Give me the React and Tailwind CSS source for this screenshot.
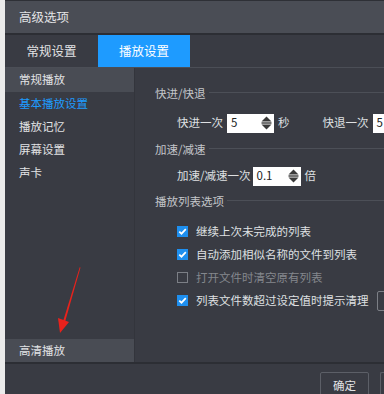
import React from "react";

const font = { fontFamily: '"Noto Sans CJK SC", "Noto Sans", sans-serif' };

function Spin() {
  return (
    <svg width="11" height="14" viewBox="0 0 11 14" className="shrink-0">
      <path d="M5.5 0.5 L10.5 5.5 L0.5 5.5 Z" fill="#3a3a3a" />
      <rect x="0.5" y="6.3" width="10" height="1.4" fill="#3a3a3a" />
      <path d="M0.5 8.5 L10.5 8.5 L5.5 13.5 Z" fill="#3a3a3a" />
    </svg>
  );
}

function NumInput({ value, w }) {
  return (
    <div className={`flex h-[19px] items-center justify-between bg-white pl-[4px] pr-[2px] ${w}`}>
      <span className="text-[11.5px] leading-none text-[#222]">{value}</span>
      <Spin />
    </div>
  );
}

function Heading({ children, className = "" }) {
  return (
    <div className={`flex h-[20px] items-center pl-[20px] ${className}`}>
      <span className="text-[11.5px] leading-none text-[#c4c6ca]">{children}</span>
      <div className="ml-[3px] h-px flex-1 -translate-y-[2px] bg-[#4c4f57]" />
    </div>
  );
}

function Check({ checked, children }) {
  return (
    <div className="flex h-[23px] items-center pl-[42px]">
      {checked ? (
        <div className="flex h-[11px] w-[11px] items-center justify-center bg-[#1e8fef]">
          <svg width="9" height="9" viewBox="0 0 9 9">
            <path d="M1.3 4.6 L3.5 6.7 L7.8 2.2" stroke="white" strokeWidth="1.7" fill="none" />
          </svg>
        </div>
      ) : (
        <div className="h-[11px] w-[11px] border border-[#7c7f86]" />
      )}
      <span
        className={`ml-[8px] whitespace-nowrap text-[11.5px] leading-none ${
          checked ? "text-[#dfe0e2]" : "text-[#84878d]"
        }`}
      >
        {children}
      </span>
    </div>
  );
}

export default function App() {
  return (
    <div
      className="relative flex h-[394px] w-[384px] overflow-hidden bg-[#393b43]"
      style={font}
    >
      <div className="w-[5px] shrink-0 bg-[#ebebeb]" />
      <div className="flex min-w-0 flex-1 flex-col">
        {/* title */}
        <div className="flex h-[35px] shrink-0 items-center border-t border-b-2 border-t-[#2e3036] border-b-[#2c2e34] bg-[#4a4d55] pl-[14px]">
          <span className="text-[12.5px] text-[#e2e3e5]">高级选项</span>
        </div>
        {/* tabs */}
        <div className="flex h-[33px] shrink-0 border-b border-[#4b4e56] bg-[#393b43]">
          <div className="flex w-[93px] items-center justify-center text-[12.5px] text-[#e2e3e5]">
            常规设置
          </div>
          <div className="flex w-[92px] items-center justify-center bg-[#1e9bff] text-[12.5px] text-white">
            播放设置
          </div>
        </div>
        {/* body */}
        <div className="flex min-h-0 flex-1">
          <div className="flex w-[130px] shrink-0 flex-col justify-between border-r border-[#33353c] bg-[#393b43]">
            <div className="flex flex-col text-[11.5px]">
              <div className="flex h-[24px] items-center bg-[#494c54] pl-[14px] text-[#e2e3e5]">常规播放</div>
              <div className="flex h-[23px] items-center pl-[14px] text-[#1e9bff]">基本播放设置</div>
              <div className="flex h-[23px] items-center pl-[14px] text-[#e2e3e5]">播放记忆</div>
              <div className="flex h-[23px] items-center pl-[14px] text-[#e2e3e5]">屏幕设置</div>
              <div className="flex h-[23px] items-center pl-[14px] text-[#e2e3e5]">声卡</div>
            </div>
            <div className="flex h-[23px] items-center bg-[#494c54] pl-[14px] text-[11.5px] text-[#e2e3e5]">
              高清播放
            </div>
          </div>
          <div className="flex min-w-0 flex-1 flex-col overflow-hidden pt-[16px]">
            <Heading>快进/快退</Heading>
            <div className="mt-[9px] flex h-[20px] items-center whitespace-nowrap pl-[42px] text-[11.5px] text-[#dfe0e2]">
              <span>快进一次</span>
              <div className="ml-[4px]">
                <NumInput value="5" w="w-[47px]" />
              </div>
              <span className="ml-[4px]">秒</span>
              <span className="ml-[33px]">快退一次</span>
              <div className="ml-[4px] shrink-0">
                <NumInput value="5" w="w-[47px]" />
              </div>
            </div>
            <Heading className="mt-[7px]">加速/减速</Heading>
            <div className="mt-[6px] flex h-[20px] items-center whitespace-nowrap pl-[42px] text-[11.5px] text-[#dfe0e2]">
              <span>加速/减速一次</span>
              <div className="ml-[2px]">
                <NumInput value="0.1" w="w-[48px]" />
              </div>
              <span className="ml-[4px]">倍</span>
            </div>
            <Heading className="mt-[6px]">播放列表选项</Heading>
            <div className="mt-[8px] flex flex-col">
              <Check checked>继续上次未完成的列表</Check>
              <Check checked>自动添加相似名称的文件到列表</Check>
              <Check checked={false}>打开文件时清空原有列表</Check>
              <div className="flex items-center">
                <Check checked>列表文件数超过设定值时提示清理</Check>
                <div className="ml-[8px] h-[20px] w-[30px] shrink-0 rounded-[2px] border border-[#7c7f86]" />
              </div>
            </div>
          </div>
        </div>
        {/* footer */}
        <div className="flex h-[32px] shrink-0 items-start justify-end gap-[11px] border-t-2 border-[#2c2e34] bg-[#393b43] pt-[8px]">
          <div className="flex h-[28px] w-[49px] items-center justify-center rounded-[2px] border border-[#5c5f67] text-[11.5px] text-[#e2e3e5]">
            确定
          </div>
          <div className="h-[28px] w-[4px] rounded-l-[2px] border-y border-l border-[#5c5f67]" />
        </div>
      </div>
      {/* red annotation arrow */}
      <svg className="pointer-events-none absolute left-0 top-0" width="384" height="394">
        <path d="M80.5 267.5 L65 322 L63 321.4 L79.7 267.3 Z" fill="#e8221c" />
        <path d="M58 318 L69 322 L60 333 Z" fill="#e8221c" />
      </svg>
    </div>
  );
}
